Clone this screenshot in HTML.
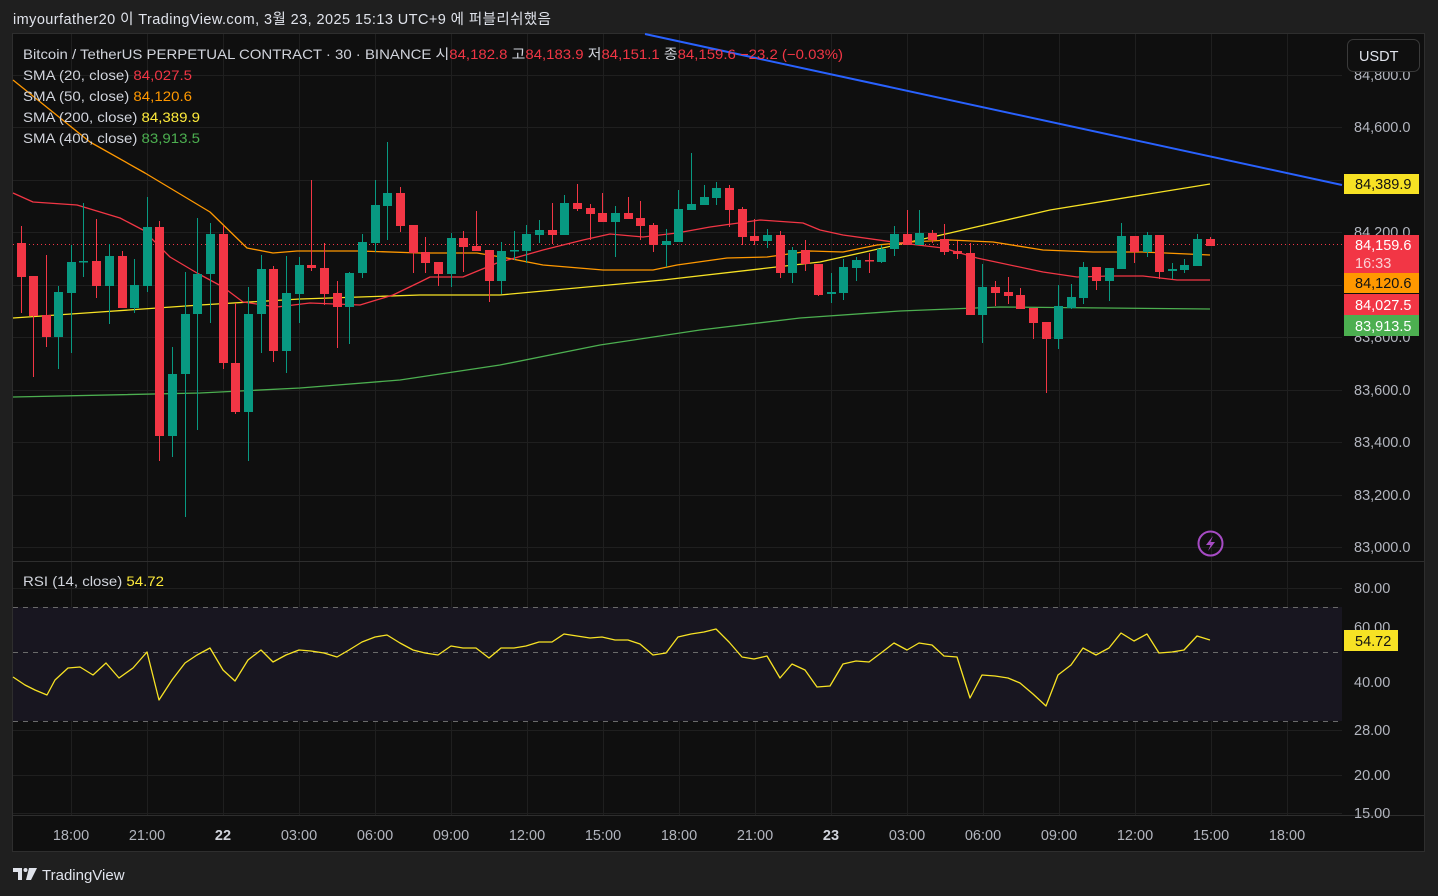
<!DOCTYPE html>
<html><head><meta charset="utf-8">
<style>
html,body{margin:0;padding:0;background:#1f1f1f;width:1438px;height:896px;overflow:hidden;font-family:"Liberation Sans","Noto Sans CJK KR",sans-serif;}
svg text{font-family:"Liberation Sans","Noto Sans CJK KR",sans-serif;}
</style></head>
<body>
<svg id="s" width="1438" height="896" xmlns="http://www.w3.org/2000/svg">
<rect x="0" y="0" width="1438" height="896" fill="#1f1f1f"/>
<text x="13" y="24" font-size="14.5" fill="#e0e3eb" textLength="538">imyourfather20 이 TradingView.com, 3월 23, 2025 15:13 UTC+9 에 퍼블리쉬했음</text>
<rect x="12.5" y="33.5" width="1412" height="818" fill="#0f0f0f" stroke="#2e2e2e"/>
<g id="grid"></g>
<rect x="13" y="607" width="1329" height="114" fill="#181620"/>
<g id="plot"></g>
<line x1="13" y1="561.5" x2="1424" y2="561.5" stroke="#2e2e2e"/>
<line x1="13" y1="815.5" x2="1424" y2="815.5" stroke="#2e2e2e"/>
<g id="axis" font-size="14.5" fill="#b2b5be"></g>
<!-- legend -->
<g font-size="14" fill="#d1d4dc">
<text x="23" y="59" textLength="820" lengthAdjust="spacingAndGlyphs">Bitcoin / TetherUS PERPETUAL CONTRACT · 30 · BINANCE  시<tspan fill="#f23645">84,182.8</tspan>  고<tspan fill="#f23645">84,183.9</tspan>  저<tspan fill="#f23645">84,151.1</tspan>  종<tspan fill="#f23645">84,159.6  −23.2 (−0.03%)</tspan></text>
<text x="23" y="80" textLength="169" lengthAdjust="spacingAndGlyphs">SMA (20, close)  <tspan fill="#f23645">84,027.5</tspan></text>
<text x="23" y="101" textLength="169" lengthAdjust="spacingAndGlyphs">SMA (50, close)  <tspan fill="#ff9800">84,120.6</tspan></text>
<text x="23" y="122" textLength="177" lengthAdjust="spacingAndGlyphs">SMA (200, close)  <tspan fill="#ffeb3b">84,389.9</tspan></text>
<text x="23" y="143" textLength="177" lengthAdjust="spacingAndGlyphs">SMA (400, close)  <tspan fill="#4caf50">83,913.5</tspan></text>
<text x="23" y="586" textLength="141" lengthAdjust="spacingAndGlyphs">RSI (14, close)  <tspan fill="#ffeb3b">54.72</tspan></text>
</g>
<rect x="1347.5" y="39.5" width="72" height="32" rx="6" fill="#0f0f0f" stroke="#3a3a3a"/>
<text x="1359" y="61" font-size="14.5" fill="#e0e3eb">USDT</text>
<!-- tags -->
<rect x="1344" y="174" width="75" height="20" fill="#f7e224"/><text x="1355" y="189" font-size="14.5" fill="#131313">84,389.9</text>
<rect x="1344" y="235" width="75" height="38" fill="#f23645"/><text x="1355" y="250" font-size="14.5" fill="#fff">84,159.6</text><text x="1355" y="268" font-size="14.5" fill="#fbd0d3">16:33</text>
<rect x="1344" y="273" width="75" height="20" fill="#ff9800"/><text x="1355" y="288" font-size="14.5" fill="#131313">84,120.6</text>
<rect x="1344" y="294" width="75" height="21" fill="#f23645"/><text x="1355" y="310" font-size="14.5" fill="#fff">84,027.5</text>
<rect x="1344" y="315" width="75" height="21" fill="#4caf50"/><text x="1355" y="331" font-size="14.5" fill="#fff">83,913.5</text>
<rect x="1344" y="630" width="54" height="21" fill="#f7e224"/><text x="1355" y="646" font-size="14.5" fill="#131313">54.72</text>
<!-- lightning -->
<circle cx="1210.5" cy="543.5" r="12" fill="none" stroke="#a64bc4" stroke-width="2"/>
<path d="M1213 536 L1206 545 L1210.5 545 L1208 551 L1215 542 L1210.5 542 Z" fill="#a64bc4"/>
<!-- footer -->
<path d="M13 868 h9 v12 h-4 v-8 h-5 z" fill="#e0e3eb"/>
<circle cx="25.5" cy="870" r="2" fill="#e0e3eb"/>
<path d="M29 868 h8 l-6 12 h-5 z" fill="#e0e3eb"/>
<text x="42" y="880" font-size="15" fill="#e0e3eb">TradingView</text>
</svg>
<script>
const NS="http://www.w3.org/2000/svg";
function el(p,t,a){const e=document.createElementNS(NS,t);for(const k in a)e.setAttribute(k,a[k]);document.getElementById(p).appendChild(e);return e;}
[75,127,180,232,285,337,390,442,495,547,588,627,682,730,775,813].forEach(y=>el('grid','line',{x1:13,x2:1342,y1:y+.5,y2:y+.5,stroke:'#1f1f1f'}));
[71,147,223,299,375,451,527,603,679,755,831,907,983,1059,1135,1211,1287].forEach(x=>el('grid','line',{x1:x+.5,x2:x+.5,y1:34,y2:815,stroke:'#1f1f1f'}));
const pl=[["84,800.0",80],["84,600.0",132],["84,200.0",237],["83,800.0",342],["83,600.0",395],["83,400.0",447],["83,200.0",500],["83,000.0",552],["80.00",593],["60.00",632],["40.00",687],["28.00",735],["20.00",780],["15.00",818]];
pl.forEach(([t,y])=>{const e=el('axis','text',{x:1354,y:y});e.textContent=t;});
const tl=[["18:00",71],["21:00",147],["22",223,1],["03:00",299],["06:00",375],["09:00",451],["12:00",527],["15:00",603],["18:00",679],["21:00",755],["23",831,1],["03:00",907],["06:00",983],["09:00",1059],["12:00",1135],["15:00",1211],["18:00",1287]];
tl.forEach(([t,x,b])=>{const e=el('axis','text',{x:x,y:840,'text-anchor':'middle','font-weight':b?'bold':'normal',fill:b?'#d1d4dc':'#b2b5be'});e.textContent=t;});
[607,652,721].forEach(y=>el('plot','line',{x1:13,x2:1342,y1:y+.5,y2:y+.5,stroke:'#6a6a6a','stroke-dasharray':'5,5'}));
el('plot','line',{x1:13,x2:1342,y1:244.5,y2:244.5,stroke:'#f23645','stroke-dasharray':'1,3'});
function pline(pts,c,w){el('plot','polyline',{points:pts.map(p=>p.join(',')).join(' '),fill:'none',stroke:c,'stroke-width':w||1.3,'stroke-linejoin':'round'});}
pline([[13,397],[200,393],[300,388],[400,380],[500,365],[600,345],[700,330],[800,318],[900,311],[1000,307],[1210,309]],'#4caf50');
pline([[13,318],[100,312],[200,305],[300,299],[420,295],[500,295],[663,280],[820,262],[950,233],[1050,210],[1173,190],[1210,184]],'#f7e224');
pline([[13,80],[90,142],[145,173],[210,212],[247,248],[273,253],[297,251],[360,251],[420,253],[477,253],[507,258],[543,265],[603,270],[653,270],[677,265],[727,258],[767,257],[810,251],[843,252],[877,245],[910,242],[950,240],[993,242],[1043,250],[1093,252],[1143,252],[1210,255]],'#ff9800');
pline([[13,193],[33,202],[77,205],[120,218],[143,230],[170,257],[197,273],[223,287],[243,302],[277,307],[310,303],[360,305],[393,295],[420,282],[430,277],[463,277],[497,263],[543,250],[583,240],[610,234],[643,237],[677,233],[710,227],[760,220],[803,223],[820,230],[843,235],[893,242],[943,248],[977,258],[1043,272],[1077,277],[1110,276],[1143,276],[1177,280],[1210,280]],'#f23645');
pline([[645,34],[1342,185]],'#2962ff',2);
const C=[[21,243,277,226,313,0],[33,276,316,276,377,0],[46,315,337,255,347,0],[58,292,337,286,369,1],[71,262,293,245,353,1],[83,261,262,203,277,1],[96,261,286,219,298,0],[109,256,286,244,324,1],[122,256,308,251,308,0],[134,285,308,259,313,1],[147,227,286,197,292,1],[159,227,436,221,461,0],[172,374,436,347,457,1],[185,314,374,272,517,1],[197,274,314,218,430,1],[210,234,274,223,323,1],[223,234,363,226,369,0],[235,363,412,303,414,0],[248,314,412,287,461,1],[261,269,314,255,353,1],[273,269,351,266,362,0],[286,293,351,256,373,1],[299,265,294,257,323,1],[311,265,268,180,271,0],[324,268,294,243,305,0],[337,293,307,281,348,0],[349,273,307,272,344,1],[362,242,273,234,278,1],[375,205,243,180,252,1],[387,193,206,142,240,1],[400,193,226,187,232,0],[413,225,253,225,273,0],[425,252,263,237,273,0],[438,262,274,262,286,0],[451,238,274,233,287,1],[463,238,247,231,272,0],[476,246,251,211,251,0],[489,250,281,250,302,0],[501,251,281,242,294,1],[514,250,251,231,260,1],[526,234,251,225,263,1],[539,230,235,220,243,1],[552,230,235,203,244,0],[564,203,235,195,235,1],[577,203,209,184,211,0],[590,208,214,204,240,0],[602,213,222,193,222,0],[615,213,222,206,257,1],[628,213,219,197,219,0],[640,218,226,201,240,0],[653,225,245,223,252,0],[666,241,245,229,267,1],[678,209,242,190,242,1],[691,204,210,153,210,1],[704,197,205,185,205,1],[716,188,198,182,205,1],[729,188,210,185,227,0],[742,209,237,207,245,0],[754,236,241,219,245,0],[767,235,241,229,248,1],[780,235,273,231,278,0],[792,250,273,247,283,1],[805,250,264,240,271,0],[818,264,295,264,296,0],[831,292,294,273,303,1],[843,267,293,259,300,1],[856,260,268,257,281,1],[869,260,261,253,273,0],[881,249,262,245,263,1],[894,234,249,226,256,1],[907,234,245,210,245,0],[919,233,245,210,245,1],[932,233,240,230,243,0],[944,239,252,224,255,0],[957,251,254,241,259,0],[970,253,315,243,315,0],[982,287,315,264,343,1],[995,287,293,281,306,0],[1008,292,296,277,304,0],[1020,295,309,288,309,0],[1033,308,323,308,339,0],[1046,322,339,322,393,0],[1058,306,339,285,349,1],[1071,297,308,284,309,1],[1083,267,298,262,304,1],[1096,267,281,267,290,0],[1109,268,281,268,301,1],[1121,236,269,223,269,1],[1134,236,252,236,263,0],[1147,235,252,232,257,1],[1159,235,272,235,279,0],[1172,269,271,263,279,1],[1184,265,270,259,273,1],[1197,239,266,234,266,1],[1210,239,246,237,246,0]];
C.forEach(([x,t,b,wt,wb,g])=>{const c=g?'#089981':'#f23645';
el('plot','line',{x1:x+.5,x2:x+.5,y1:wt,y2:wb,stroke:c,'stroke-width':1});
el('plot','rect',{x:x-4,y:t,width:9,height:Math.max(1.5,b-t),fill:c});});
pline([[13,677],[25,685],[35,690],[47,695],[55,680],[68,668],[80,667],[93,675],[106,663],[119,678],[133,668],[147,652],[159,700],[172,680],[185,663],[197,655],[210,648],[223,670],[235,681],[248,660],[261,650],[273,662],[286,655],[299,650],[311,651],[324,653],[337,657],[349,650],[362,642],[375,637],[387,635],[400,643],[413,650],[425,653],[438,655],[451,646],[463,648],[476,648],[489,658],[501,648],[514,648],[526,646],[539,642],[552,642],[564,634],[577,636],[590,638],[602,637],[615,640],[628,640],[640,644],[653,655],[666,653],[678,637],[691,634],[704,632],[716,629],[729,642],[742,657],[754,659],[767,656],[780,678],[792,664],[805,670],[817,687],[830,686],[843,664],[856,661],[869,662],[881,653],[894,643],[907,650],[919,643],[932,645],[944,656],[957,657],[970,698],[982,675],[995,676],[1008,678],[1020,683],[1033,694],[1046,706],[1058,675],[1071,665],[1083,648],[1096,655],[1109,648],[1121,633],[1134,641],[1147,634],[1159,653],[1172,652],[1184,650],[1197,636],[1210,640]],'#f7e224',1.3);
</script>
</body></html>
